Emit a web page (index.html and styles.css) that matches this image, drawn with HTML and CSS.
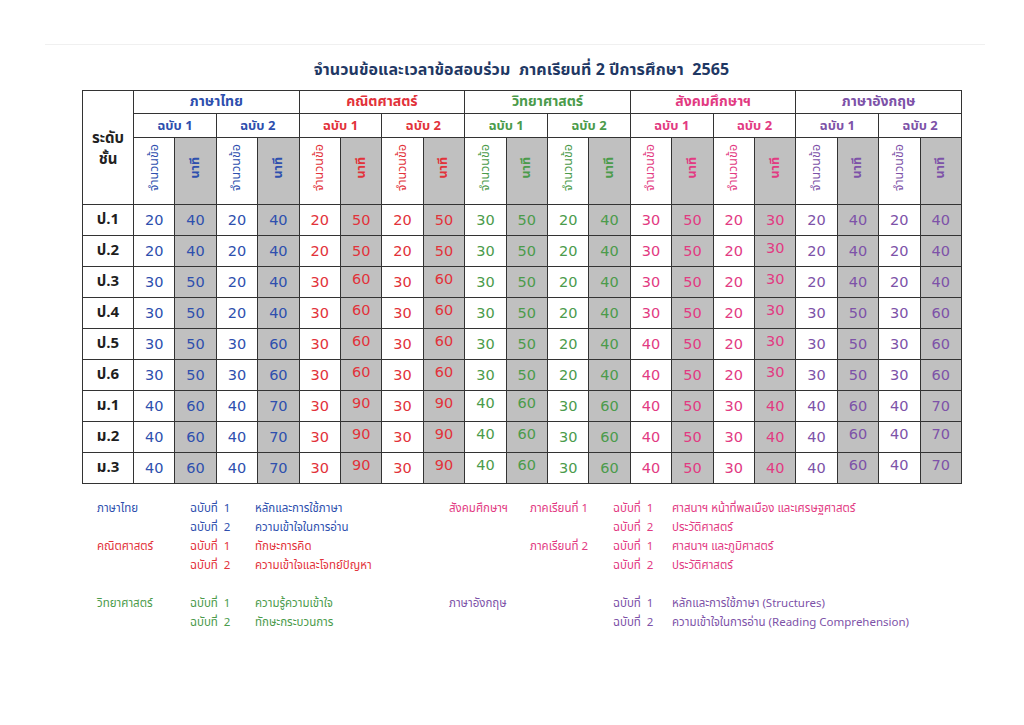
FILE: index.html
```html
<!DOCTYPE html>
<html lang="th">
<head>
<meta charset="utf-8">
<title>จำนวนข้อและเวลาข้อสอบร่วม</title>
<link rel="stylesheet" href="styles.css">
</head>
<body>
<div class="sheet">
  <div class="inner">
    <h1 class="title">จำนวนข้อและเวลาข้อสอบร่วม&nbsp; ภาคเรียนที่ 2 ปีการศึกษา&nbsp; 2565</h1>
    <table class="grid">
      <colgroup>
        <col class="c-lv">
        <col span="20" class="c-n">
      </colgroup>
      <tr class="r1">
        <th rowspan="3" class="lvh"><span class="lvl">ระดับ</span><span class="lvl">ชั้น</span></th>
        <th colspan="4" class="th">ภาษาไทย</th>
        <th colspan="4" class="ma">คณิตศาสตร์</th>
        <th colspan="4" class="sc">วิทยาศาสตร์</th>
        <th colspan="4" class="so">สังคมศึกษาฯ</th>
        <th colspan="4" class="en">ภาษาอังกฤษ</th>
      </tr>
      <tr class="r2">
        <th colspan="2" class="th">ฉบับ 1</th><th colspan="2" class="th">ฉบับ 2</th>
        <th colspan="2" class="ma">ฉบับ 1</th><th colspan="2" class="ma">ฉบับ 2</th>
        <th colspan="2" class="sc">ฉบับ 1</th><th colspan="2" class="sc">ฉบับ 2</th>
        <th colspan="2" class="so">ฉบับ 1</th><th colspan="2" class="so">ฉบับ 2</th>
        <th colspan="2" class="en">ฉบับ 1</th><th colspan="2" class="en">ฉบับ 2</th>
      </tr>
      <tr class="r3">
        <th class="th"><span class="vt">จำนวนข้อ</span></th><th class="th g"><span class="vt">นาที</span></th>
        <th class="th"><span class="vt">จำนวนข้อ</span></th><th class="th g"><span class="vt">นาที</span></th>
        <th class="ma"><span class="vt">จำนวนข้อ</span></th><th class="ma g"><span class="vt">นาที</span></th>
        <th class="ma"><span class="vt">จำนวนข้อ</span></th><th class="ma g"><span class="vt">นาที</span></th>
        <th class="sc"><span class="vt">จำนวนข้อ</span></th><th class="sc g"><span class="vt">นาที</span></th>
        <th class="sc"><span class="vt">จำนวนข้อ</span></th><th class="sc g"><span class="vt">นาที</span></th>
        <th class="so"><span class="vt">จำนวนข้อ</span></th><th class="so g"><span class="vt">นาที</span></th>
        <th class="so"><span class="vt">จำนวนข้อ</span></th><th class="so g"><span class="vt">นาที</span></th>
        <th class="en"><span class="vt">จำนวนข้อ</span></th><th class="en g"><span class="vt">นาที</span></th>
        <th class="en"><span class="vt">จำนวนข้อ</span></th><th class="en g"><span class="vt">นาที</span></th>
      </tr>
      <tr>
        <th class="lv">ป.1</th>
        <td class="th">20</td><td class="th g">40</td><td class="th">20</td><td class="th g">40</td>
        <td class="ma">20</td><td class="ma g">50</td><td class="ma">20</td><td class="ma g">50</td>
        <td class="sc">30</td><td class="sc g">50</td><td class="sc">20</td><td class="sc g">40</td>
        <td class="so">30</td><td class="so g">50</td><td class="so">20</td><td class="so g">30</td>
        <td class="en">20</td><td class="en g">40</td><td class="en">20</td><td class="en g">40</td>
      </tr>
      <tr>
        <th class="lv">ป.2</th>
        <td class="th">20</td><td class="th g">40</td><td class="th">20</td><td class="th g">40</td>
        <td class="ma">20</td><td class="ma g">50</td><td class="ma">20</td><td class="ma g">50</td>
        <td class="sc">30</td><td class="sc g">50</td><td class="sc">20</td><td class="sc g">40</td>
        <td class="so">30</td><td class="so g">50</td><td class="so">20</td><td class="so g up">30</td>
        <td class="en">20</td><td class="en g">40</td><td class="en">20</td><td class="en g">40</td>
      </tr>
      <tr>
        <th class="lv">ป.3</th>
        <td class="th">30</td><td class="th g">50</td><td class="th">20</td><td class="th g">40</td>
        <td class="ma">30</td><td class="ma g up">60</td><td class="ma">30</td><td class="ma g up">60</td>
        <td class="sc">30</td><td class="sc g">50</td><td class="sc">20</td><td class="sc g">40</td>
        <td class="so">30</td><td class="so g">50</td><td class="so">20</td><td class="so g up">30</td>
        <td class="en">20</td><td class="en g">40</td><td class="en">20</td><td class="en g">40</td>
      </tr>
      <tr>
        <th class="lv">ป.4</th>
        <td class="th">30</td><td class="th g">50</td><td class="th">20</td><td class="th g">40</td>
        <td class="ma">30</td><td class="ma g up">60</td><td class="ma">30</td><td class="ma g up">60</td>
        <td class="sc">30</td><td class="sc g">50</td><td class="sc">20</td><td class="sc g">40</td>
        <td class="so">30</td><td class="so g">50</td><td class="so">20</td><td class="so g up">30</td>
        <td class="en">30</td><td class="en g">50</td><td class="en">30</td><td class="en g">60</td>
      </tr>
      <tr>
        <th class="lv">ป.5</th>
        <td class="th">30</td><td class="th g">50</td><td class="th">30</td><td class="th g">60</td>
        <td class="ma">30</td><td class="ma g up">60</td><td class="ma">30</td><td class="ma g up">60</td>
        <td class="sc">30</td><td class="sc g">50</td><td class="sc">20</td><td class="sc g">40</td>
        <td class="so">40</td><td class="so g">50</td><td class="so">20</td><td class="so g up">30</td>
        <td class="en">30</td><td class="en g">50</td><td class="en">30</td><td class="en g">60</td>
      </tr>
      <tr>
        <th class="lv">ป.6</th>
        <td class="th">30</td><td class="th g">50</td><td class="th">30</td><td class="th g">60</td>
        <td class="ma">30</td><td class="ma g up">60</td><td class="ma">30</td><td class="ma g up">60</td>
        <td class="sc">30</td><td class="sc g">50</td><td class="sc">20</td><td class="sc g">40</td>
        <td class="so">40</td><td class="so g">50</td><td class="so">20</td><td class="so g up">30</td>
        <td class="en">30</td><td class="en g">50</td><td class="en">30</td><td class="en g">60</td>
      </tr>
      <tr>
        <th class="lv">ม.1</th>
        <td class="th">40</td><td class="th g">60</td><td class="th">40</td><td class="th g">70</td>
        <td class="ma">30</td><td class="ma g up">90</td><td class="ma">30</td><td class="ma g up">90</td>
        <td class="sc up">40</td><td class="sc g up">60</td><td class="sc">30</td><td class="sc g">60</td>
        <td class="so">40</td><td class="so g">50</td><td class="so">30</td><td class="so g">40</td>
        <td class="en">40</td><td class="en g">60</td><td class="en">40</td><td class="en g">70</td>
      </tr>
      <tr>
        <th class="lv">ม.2</th>
        <td class="th">40</td><td class="th g">60</td><td class="th">40</td><td class="th g">70</td>
        <td class="ma">30</td><td class="ma g up">90</td><td class="ma">30</td><td class="ma g up">90</td>
        <td class="sc up">40</td><td class="sc g up">60</td><td class="sc">30</td><td class="sc g">60</td>
        <td class="so">40</td><td class="so g">50</td><td class="so">30</td><td class="so g">40</td>
        <td class="en">40</td><td class="en g up">60</td><td class="en up">40</td><td class="en g up">70</td>
      </tr>
      <tr>
        <th class="lv">ม.3</th>
        <td class="th">40</td><td class="th g">60</td><td class="th">40</td><td class="th g">70</td>
        <td class="ma">30</td><td class="ma g up">90</td><td class="ma">30</td><td class="ma g up">90</td>
        <td class="sc up">40</td><td class="sc g up">60</td><td class="sc">30</td><td class="sc g">60</td>
        <td class="so">40</td><td class="so g">50</td><td class="so">30</td><td class="so g">40</td>
        <td class="en">40</td><td class="en g up">60</td><td class="en up">40</td><td class="en g up">70</td>
      </tr>
    </table>

    <div class="legend">
      <div class="th">ภาษาไทย</div><div class="th">ฉบับที่&nbsp; 1</div><div class="th">หลักและการใช้ภาษา</div>
      <div class="so">สังคมศึกษาฯ</div><div class="so">ภาคเรียนที่ 1</div><div class="so">ฉบับที่&nbsp; 1</div><div class="so">ศาสนาฯ หน้าที่พลเมือง และเศรษฐศาสตร์</div>

      <div></div><div class="th">ฉบับที่&nbsp; 2</div><div class="th">ความเข้าใจในการอ่าน</div>
      <div></div><div></div><div class="so">ฉบับที่&nbsp; 2</div><div class="so">ประวัติศาสตร์</div>

      <div class="ma">คณิตศาสตร์</div><div class="ma">ฉบับที่&nbsp; 1</div><div class="ma">ทักษะการคิด</div>
      <div></div><div class="so">ภาคเรียนที่ 2</div><div class="so">ฉบับที่&nbsp; 1</div><div class="so">ศาสนาฯ และภูมิศาสตร์</div>

      <div></div><div class="ma">ฉบับที่&nbsp; 2</div><div class="ma">ความเข้าใจและโจทย์ปัญหา</div>
      <div></div><div></div><div class="so">ฉบับที่&nbsp; 2</div><div class="so">ประวัติศาสตร์</div>

      <div class="blank"></div>

      <div class="sc">วิทยาศาสตร์</div><div class="sc">ฉบับที่&nbsp; 1</div><div class="sc">ความรู้ความเข้าใจ</div>
      <div class="en">ภาษาอังกฤษ</div><div></div><div class="en">ฉบับที่&nbsp; 1</div><div class="en">หลักและการใช้ภาษา (Structures)</div>

      <div></div><div class="sc">ฉบับที่&nbsp; 2</div><div class="sc">ทักษะกระบวนการ</div>
      <div></div><div></div><div class="en">ฉบับที่&nbsp; 2</div><div class="en">ความเข้าใจในการอ่าน (Reading Comprehension)</div>
    </div>
  </div>
</div>
</body>
</html>
```

FILE: styles.css
```css
html, body {
  margin: 0;
  padding: 0;
  background: #ffffff;
}

body {
  font-family: Tahoma, "Noto Sans Thai", "Noto Sans Thai UI", Loma, Garuda, "DejaVu Sans", sans-serif;
  color: #222;
}

.sheet {
  margin: 44px 39px 0 45px;
  border-top: 1px solid #f0f0f0;
  height: 680px;
}

.inner {
  padding: 13px 0 0 37px;
  width: 879px;
}

.title {
  margin: 0;
  height: 32px;
  line-height: 24px;
  font-size: 16px;
  font-weight: bold;
  color: #1f3864;
  text-align: center;
  letter-spacing: 0.1px;
}

.grid {
  width: 879px;
  table-layout: fixed;
  border-collapse: collapse;
}

.c-lv { width: 51px; }
.c-n { width: 41.4px; }

.grid th, .grid td {
  border: 1px solid #333;
  padding: 0;
  text-align: center;
  vertical-align: middle;
  background: #fff;
}

.grid .g { background: #c0c0c0; }

.r1 th {
  height: 22px;
  line-height: 18px;
  font-size: 14px;
  font-weight: bold;
}

.r2 th {
  height: 23px;
  line-height: 18px;
  font-size: 13px;
  font-weight: bold;
}

.r3 th {
  height: 66px;
  font-size: 12.5px;
  font-weight: normal;
}

.r3 th.g { font-weight: bold; }

.vt {
  display: inline-block;
  writing-mode: vertical-rl;
  transform: rotate(180deg);
  line-height: 13px;
}

.grid th.lvh {
  font-size: 15px;
  font-weight: bold;
  color: #222;
  line-height: 18px;
  padding-top: 4px;
}

.lvl {
  display: block;
  margin: 3px 0;
}

.grid td, .lv {
  height: 30px;
  line-height: 18px;
  font-family: "DejaVu Sans", Tahoma, sans-serif;
  font-size: 14.5px;
}

.lv {
  font-family: Tahoma, "Noto Sans Thai", Loma, Garuda, "DejaVu Sans", sans-serif;
  font-size: 15px;
  font-weight: bold;
  color: #1e1e1e;
}

.grid td.up {
  padding-bottom: 6px;
  height: 24px;
}

.th { color: #2e4fae; }
.ma { color: #e2323a; }
.sc { color: #4b9b4b; }
.so { color: #e23a82; }
.en { color: #7d52a8; }

.legend {
  margin: 15px 0 0 15px;
  display: grid;
  grid-template-columns: 93px 65px 194px 81px 83px 59px 1fr;
  grid-auto-rows: 19px;
  font-size: 11.5px;
  line-height: 19px;
  white-space: nowrap;
}

.legend .blank {
  grid-column: 1 / -1;
}
```
